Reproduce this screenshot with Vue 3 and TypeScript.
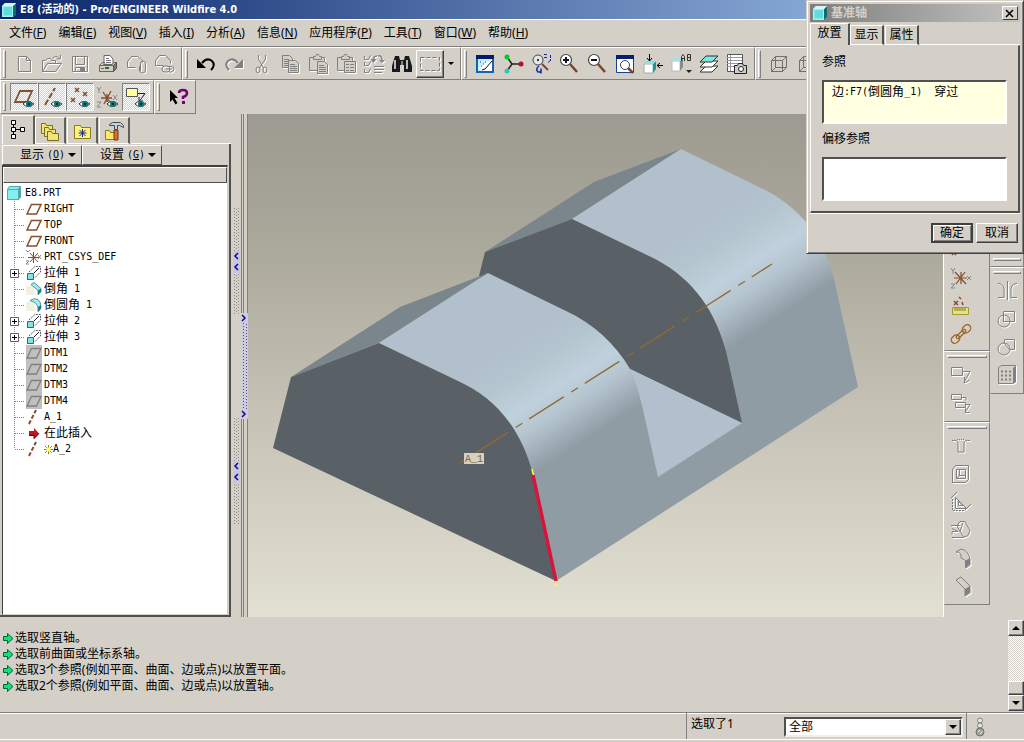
<script setup lang="ts">
import { ref } from 'vue'

interface Tool { icon: string; label: string; off?: boolean; pressed?: boolean; raised?: boolean; arrow?: boolean }
interface Node { text: string; icon: string; expand?: boolean; grey?: boolean; last?: boolean; fresh?: boolean }

const menus: [string, string][] = [
  ['文件', 'F'], ['编辑', 'E'], ['视图', 'V'], ['插入', 'I'], ['分析', 'A'],
  ['信息', 'N'], ['应用程序', 'P'], ['工具', 'T'], ['窗口', 'W'], ['帮助', 'H'],
]

const cube = '<path d="M1 4l3-3h11v11l-3 3H1z" fill="#7de9ec"/><path d="M3 5h9v8H3z" fill="#5fdcdc"/><path d="M12 4l3-3v11l-3 3z" fill="#156868"/><path d="M1.500 4.500h10v10h-10z" fill="none" stroke="#a8f0f0"/><path d="M1 4l3-3h11l-3 3z" fill="#d8f4f4"/>'
const eye = '<path d="M11 19q4-5 11 0q-6 5-11 0z" fill="#fff" stroke="#333"/><circle cx="17" cy="19" r="3" fill="#087878"/><circle cx="17" cy="19" r="1" fill="#012"/>'
const marks = '<path d="M7 3l4 4m0-4l-4 4M3 13l4 4m0-4l-4 4M15 7l4 4m0-4l-4 4" stroke="#84502f" stroke-width="1.500"/>'
const g = (d: string) => `<path d="${d}" fill="none" stroke="#808080"/>`
const lens = (inner: string) => `<path d="M13 12l7 8" stroke="#7a4630" stroke-width="2.500"/><circle cx="9" cy="8" r="5.500" fill="#fff" stroke="#444" stroke-width="1.200"/>${inner}`
const doc = (x: number, y: number) => `<path d="M${x}.5 ${y}.5h7l3 3v9h-10z" fill="#d4d0c8" stroke="#808080"/><path d="M${x + 2} ${y + 4}.5h5M${x + 2} ${y + 6}.5h7M${x + 2} ${y + 8}.5h7M${x + 2} ${y + 10}.5h7" stroke="#808080"/>`
const clip = '<path d="M3.500 5.500h15v13h-15z" fill="#d4d0c8" stroke="#808080"/><path d="M7.500 7.500v-3h2l1-2h2l1 2h2v3z" fill="#d4d0c8" stroke="#808080"/>'

const icons: Record<string, string> = {
  fresh: g('M6.500 4.500h8l4 4v11h-12zM14.500 4.500v4h4'),
  open: g('M2.500 19.500v-11h3l2-2h3l1 2h4v3M2.500 19.500l5-8h14l-6 8zM12.500 6.500q3-4 7 0M20.500 3v4h-4'),
  save: g('M4.500 4.500h15v15h-15zM7.500 4.500v8h9v-8M7.500 19v-3.500h9v4') + '<path d="M12 16h4v3h-4z" fill="#808080"/>',
  print: '<path d="M8 11V3.500h6l3 3.500v5" fill="#fff" stroke="#666"/><path d="M10 6.500h3M10 8.500h5M10 10.500h5" stroke="#777"/><path d="M3.500 13.500l3-3h2l-1 2h9l1-2h3l-3 3z" fill="#d8d8d0" stroke="#666"/><path d="M3.500 13.500h14v6h-14z" fill="#d0d0c4" stroke="#666"/><path d="M17.500 13.500l3-3v6l-3 3z" fill="#777" stroke="#555"/><path d="M9 15h4v2H9z" fill="#286a38"/><path d="M5 16.500h3" stroke="#a44"/>',
  mail: g('M3.500 15.500v-6l4-5h6l5 4v2M3.500 15.500h8M16.500 19v-7q0-3 2.500-3t2.500 3v6q0 3-3 3t-3-3v-4'),
  link: g('M3.500 13.500v-5l4-5h6l5 5v3M3.500 13.500h8M10 17q0-3 3-3h2q3 0 3 3t-3 3h-2q-3 0-3-3M14 17h6M16 14.500h3q3 0 3 2.500t-3 3h-2'),
  undo: '<path d="M8 11q5-6 10-2q4 4-1 9" fill="none" stroke="#000" stroke-width="2"/><path d="M3 7v9h9z" fill="#000"/>',
  redo: '<path d="M16 11q-5-6-10-2q-4 4 1 9" fill="none" stroke="#808080" stroke-width="2"/><path d="M21 7v9h-9z" fill="#808080"/>',
  cut: g('M8.500 3v4l5 9M15.500 3v4l-6 9') + '<ellipse cx="8" cy="18" rx="2" ry="3" fill="none" stroke="#808080"/><ellipse cx="15" cy="18" rx="2" ry="3" fill="none" stroke="#808080"/>',
  copy: doc(4, 3) + doc(10, 8),
  paste: clip + doc(11, 9),
  special: clip + '<path d="M10.500 9.500h11v11h-11z" fill="#d4d0c8" stroke="#808080"/>' + g('M12 12.500h3M12 15.500h3M12 18.500h3M16 12.500h4M16 15.500h4M16 18.500h4'),
  regen: g('M2.500 4v3.500h4l2-4M2.500 10v3.500h4l2-4M2.500 17v3.500h4l2-4M12 14.500h10M12 17.500h10M12 20.500h8')
    + '<path d="M15 4q-4 0-3.500 5M16 4q4-1 4 5" fill="none" stroke="#808080" stroke-width="1.500"/><path d="M8.500 7h6l-3 4zM17 8h6l-3 3z" fill="#808080"/>',
  find: '<path d="M5 4h4l1 4h4l1-4h4l3 10v6h-8v-7h-4v7H2v-6z" fill="#1a1a1a"/><path d="M5 8v9M17 8v9" stroke="#bbb" stroke-width="2"/><path d="M11 9h2v4h-2z" fill="#888"/>',
  region: '<path d="M3.500 6.500h19v13h-19z" fill="none" stroke="#fff" stroke-dasharray="4 2"/><path d="M2.500 5.500h19v13h-19z" fill="none" stroke="#777" stroke-dasharray="4 2"/>',
  repaint: '<path d="M3 3h18v18H3z" fill="#1464b4"/><path d="M3 3h18v4H3z" fill="#001a72"/><path d="M5 7h14v12H5z" fill="#c5eeff"/><path d="M19 7v12H9l-4-3z" fill="#fff"/><path d="M19 9l-7 8l-3 1" stroke="#111" fill="none"/><path d="M7 10h1M10 12h1M8 14h1M12 10h1" stroke="#069"/>',
  spin: '<path d="M6 5l5 7M6 19l5-7h9" stroke="#222" fill="none" stroke-width="1.500"/><circle cx="6" cy="5" r="2.500" fill="#0c2"/><circle cx="6" cy="19" r="2.500" fill="#2bc7bd"/><circle cx="20" cy="12" r="2.500" fill="#b01522"/>',
  orient: '<circle cx="9" cy="8" r="5" fill="#e5e5e5" stroke="#444"/><circle cx="9" cy="8" r="1" fill="#000"/><path d="M13 12l6 6" stroke="#7a4630" stroke-width="2"/><path d="M15 2.500h4M15 5.500h3M21.500 3v6M19 10.500l2.500-2" stroke="#1425a0" fill="none" stroke-dasharray="3 1"/><path d="M10 14q-4 3-1 6h3M12 16.500v5" stroke="#1425a0" fill="none" stroke-width="1.500"/>',
  zoomin: lens('<path d="M6 8h6M9 5v6" stroke="#112" stroke-width="2"/>'),
  zoomout: lens('<path d="M6 8h6" stroke="#112" stroke-width="2"/>'),
  refit: '<path d="M3.500 3.500h17v17h-17z" fill="#fff" stroke="#14429a"/><path d="M3 3h18v4H3z" fill="#061f76"/><path d="M15 16l5 5" stroke="#7a4630" stroke-width="2.500"/><circle cx="12" cy="13" r="4.500" fill="#fff" stroke="#444"/>',
  reorient: '<path d="M3 12h9v9H3z" fill="#fff" stroke="#aaa"/><path d="M12 12l3-3v8l-3 4z" fill="#169a9a"/><path d="M6 9h9l-3 3H3z" fill="#7fe5e5"/><path d="M8.500 2v7M6 6l2.500 3l2.500-3M22 13.500h-6M19 11l-3 2.500l3 2.500" stroke="#000" fill="none"/>',
  views: '<path d="M3 9h8v10H3z" fill="#fff" stroke="#bbb"/><path d="M11 9l3-3v9l-3 4z" fill="#8a8a8a"/><path d="M6 6h8l-3 3H3z" fill="#9fe5e5"/><path d="M12.500 9V4.500l1.500-2l1.500 2V9M12.500 6.500h3M18.500 2.500v6h3v-6zM18.500 5.500h3" fill="none" stroke="#333"/><path d="M17 18h6l-3 3z" fill="#222"/>',
  layers: '<g stroke="#333" fill="#fff"><path d="M3 20l6-6h12l-6 6z"/><path d="M3 15l6-6h12l-6 6z"/><path d="M3 10l6-6h12l-6 6z" fill="#7fe6e6"/></g>',
  shot: '<path d="M2.500 2.500h15v17h-15z" fill="#fff" stroke="#555"/><path d="M2 5.500h15M2 8.500h15M2 11.500h15M2 14.500h15M5.500 3v16" stroke="#999"/><path d="M9.500 13.500h3l1-2h4l1 2h3v8h-12z" fill="#ccc" stroke="#222"/><circle cx="16" cy="17" r="2.500" fill="#fff" stroke="#222"/>',
  wire: '<path d="M4.500 8.500h11v11h-11zM8.500 4.500h11v11h-11zM4.500 8.500l4-4M15.500 8.500l4-4M15.500 19.500l4-4M4.500 19.500l4-4" fill="none" stroke="#707070"/>',
  plane: '<path d="M3 17L8 6h12l-5 11z" fill="none" stroke="#84502f" stroke-width="1.800"/>' + eye,
  axis: '<path d="M5 20L15 3" stroke="#84502f" stroke-width="2" stroke-dasharray="6 2"/>' + eye,
  points: marks + eye,
  marks,
  csys: '<path d="M5 13h11M7 7l8 12M15 6L8 19M11 9v8" stroke="#84502f" stroke-width="1.300"/><path d="M1 2l2 3l2-3M3 5v3M17 10l4 5m0-5l-4 5M1 17h4l-4 5h4" stroke="#888" fill="none"/>' + eye,
  annot: '<path d="M2.500 3.500h11v8h-11z" fill="#ffffa0" stroke="#555"/><path d="M14 8.500h7l-5 7M15 12v4h4" stroke="#222" fill="none"/>' + eye,
  help: '<path d="M4 5l8 8H8.500l3 5l-2 1.500l-3-5L4 17z" fill="#000"/><path d="M13 8q0-3 4-3t4 3q0 3-4 4v2" fill="none" stroke="#750078" stroke-width="2.500"/><path d="M16 16h3v3h-3z" fill="#750078"/>',
  rcsys: '<path d="M5 12h13M6 6l11 12M16 6L7 18M12 6v12" stroke="#84502f" stroke-width="1.200"/><path d="M2 2l2 3l2-3M4 5v3M18 10l4 4m0-4l-4 4M2 18h4l-4 4h4" stroke="#888" fill="none"/>',
  ruler: '<path d="M5 7l4 4m0-4l-4 4M10 3l2 2M13 8l1 3" stroke="#84502f" stroke-width="1.500"/><path d="M3.500 13.500h16v7h-16z" fill="#e4e18a" stroke="#a29a30"/><path d="M6 14v3M8 14v3M10 14v3M12 14v3M14 14v3M16 14v3" stroke="#827a20"/>',
  chain: '<g fill="none" stroke="#9b6427" stroke-width="1.300" transform="rotate(-43 12 12)"><rect x="0" y="8.500" width="9" height="7" rx="3.500"/><rect x="6" y="10.500" width="12" height="3" rx="1.500"/><rect x="15" y="8.500" width="9" height="7" rx="3.500"/></g>',
  note: g('M2.500 4.500h11v8h-11zM14 8.500h7l-6 11M15.500 14v6l5-3'),
  notes: g('M2.500 3.500h10v5h-10zM13 6.500h4v3M6.500 11.500h10v5h-10zM17 13.500h4l-5 8M16.500 17v4.500h4'),
  hole: g('M3 6.500q6-1 6 3v8.500h6v-8.500q0-4 6-3') + '<path d="M8 5.500h8" stroke="#808080" stroke-dasharray="1 1"/>',
  shell: g('M3.500 7.500l3-4h13v14l-3 3h-13zM7.500 7.500h9v9h-9zM7.500 16.500l3-3h6M10.500 13.500v-6'),
  rib: g('M6.500 18.500v-11l11 11zM9.500 15.500v-4l5 4zM2 8l6-6M16 20l6-6') + '<path d="M3.500 9v11.500h12" fill="none" stroke="#808080" stroke-dasharray="2 1"/>',
  draft: g('M2 7.500h9M3 10.500l6 3H3M3 19.500h11l5-2l2-5l-5-9h-5l-3 4l3 6l3-9M14.500 19l-4-7M3 14.500v2'),
  round: '<path d="M12 12l5 3v7l4-3v-6q-2-9-9-10l-5 3q6 0 5 6z" fill="#d4d0c8" stroke="#808080"/><path d="M16 15l5-3v6l-5 4z" fill="#808080"/>',
  chamf: '<path d="M7 6l5-3l9 9v7l-5 3v-7z" fill="#d4d0c8" stroke="#808080"/><path d="M16 15l5-3v6l-5 4z" fill="#808080"/>',
  mirror: g('M12.500 2v19M3 4.500h1q6 1 5 9v5H3M22 4.500h-1q-6 1-5 9v5h6'),
  merge: '<circle cx="9" cy="14" r="6" fill="none" stroke="#808080"/>' + g('M8.500 4.500h11v10h-11z'),
  trim: '<circle cx="9" cy="14" r="6" fill="none" stroke="#808080"/>' + g('M9.500 8.500v-4h10v10h-5M9.500 8.500l5 6'),
  pattern: '<path d="M3.500 4.500l3-2h14v16l-3 2h-14z" fill="#d4d0c8" stroke="#808080"/><path d="M18 5l3-2v16l-3 2z" fill="#808080"/><path d="M6 8.500h11M6 12.500h11M6 16.500h11" stroke="#808080" stroke-width="2" stroke-dasharray="2 2"/>',
  tree: '<path d="M5.500 3.500h4v4h-4zM5.500 10.500h4v4h-4zM5.500 17.500h4v4h-4zM14.500 10.500h4v4h-4z" fill="#fff" stroke="#000"/><path d="M7.500 8v2M7.500 15v2M10 12.500h4" stroke="#000"/>',
  folders: '<g fill="#f2e47a" stroke="#77701c"><path d="M3.500 4.500h4l1 2h6v8h-11z"/><path d="M6.500 8.500h4l1 2h6v7h-11z"/><path d="M9.500 12.500h4l1 2h6v7h-11z"/></g>',
  favor: '<path d="M4.500 6.500h6l1 2h9v11h-16z" fill="#fff27a" stroke="#8a7a20"/><path d="M8.500 14h8M12.500 10v8M9.500 11l6 6M15.500 11l-6 6" stroke="#182880"/>',
  hammer: '<path d="M3.500 11.500h4l1 2h6v7h-11z" fill="#ffe86a" stroke="#8a7a20"/><path d="M7.500 5.500l3-2h8l3 3v2l-4-2h-2v4h-3v-4h-5z" fill="#c3d2dc" stroke="#444c55"/><path d="M12 11h4v10h-4z" fill="#d6742c" stroke="#743310"/>',
}

const small: Record<string, string> = {
  part: '<path d="M1 4l2-3h12v11l-2 3H1z" fill="#84eef0"/><path d="M12 4l3-3v11l-3 3z" fill="#3aa5aa"/><path d="M1.500 4.500h11v10h-11zM1.500 4.500l2-3h11v10l-2 3M12.500 4.500l2-3" fill="none" stroke="#5aa9ac"/>',
  plane: '<path d="M1 13L5.500 3.500H15L10.500 13z" fill="none" stroke="#84502f" stroke-width="1.500"/>',
  grey: '<path d="M0 0h16v16H0z" fill="#c0c0c0"/><path d="M1 13L5.500 3.500H15L10.500 13z" fill="none" stroke="#808080" stroke-width="1.300"/>',
  csys: '<path d="M2 8.500h11M4 4l8 9M12 4l-8 9M7.500 3v11" stroke="#84502f"/><path d="M0 1l2 2l2-2M12 6l3 4m0-4l-3 4M0 12h3l-3 3h3" stroke="#888" fill="none"/>',
  extrude: '<path d="M1.500 8.500h6v6h-6z" fill="#84e6e8" stroke="#1c6f72"/><path d="M3 7l6-5.500h5.500V7L8.500 13" fill="none" stroke="#556" stroke-dasharray="2 1"/><path d="M8 8l5-5" stroke="#223"/>',
  chamfer: '<path d="M0 6l6-4l4 12H0z" fill="#f2f0e0"/><path d="M5 3.500l3-2l7 6v3l-3 3v-4z" fill="#9eeef0" stroke="#5a9a9c"/><path d="M12 9.500l3-2v3.500l-3 3z" fill="#1f7a7e"/>',
  round: '<path d="M0 6l6-4l4 12H0z" fill="#f2f0e0"/><path d="M4 3.500q4-3 8-1q3 2 3 8l-3 4q1-9-8-11z" fill="#9eeef0" stroke="#5a9a9c"/><path d="M12 10l3-2v4l-3 3z" fill="#1f7a7e"/>',
  axis: '<path d="M3 15L10 1" stroke="#84502f" stroke-width="2" stroke-dasharray="4 2"/>',
  insert: '<path d="M3 6h5V3l5 5.500L8 14v-3H3z" fill="#c01420"/><path d="M3 10.500h5v3l5-5" fill="none" stroke="#600"/>',
}

const fileTools: Tool[] = [
  { icon: 'fresh', label: '新建', off: true }, { icon: 'open', label: '打开', off: true }, { icon: 'save', label: '保存', off: true },
  { icon: 'print', label: '打印' }, { icon: 'mail', label: '发送', off: true }, { icon: 'link', label: '链接', off: true },
]
const editTools: Tool[] = [
  { icon: 'undo', label: '撤消' }, { icon: 'redo', label: '重做', off: true }, { icon: 'cut', label: '剪切', off: true },
  { icon: 'copy', label: '复制', off: true }, { icon: 'paste', label: '粘贴', off: true }, { icon: 'special', label: '选择性粘贴', off: true },
  { icon: 'regen', label: '再生', off: true }, { icon: 'find', label: '查找' }, { icon: 'region', label: '选取框', raised: true, arrow: true },
]
const viewTools: Tool[] = [
  { icon: 'repaint', label: '重画' }, { icon: 'spin', label: '旋转中心' }, { icon: 'orient', label: '定向模式' },
  { icon: 'zoomin', label: '放大' }, { icon: 'zoomout', label: '缩小' }, { icon: 'refit', label: '重新调整' },
  { icon: 'reorient', label: '重定向' }, { icon: 'views', label: '视图列表' }, { icon: 'layers', label: '层' }, { icon: 'shot', label: '视图管理器' },
]
const modelTools: Tool[] = [{ icon: 'wire', label: '线框' }, { icon: 'wire', label: '隐藏线' }]
const topRow = [fileTools, editTools, viewTools, modelTools]
const datumRow: Tool[][] = [
  [
    { icon: 'plane', label: '平面显示', pressed: true }, { icon: 'axis', label: '轴显示', pressed: true },
    { icon: 'points', label: '点显示', pressed: true }, { icon: 'csys', label: '坐标系显示' }, { icon: 'annot', label: '注释显示', pressed: true },
  ],
  [{ icon: 'help', label: '帮助' }],
]
const sideA: Tool[][] = [
  [{ icon: 'marks', label: '点' }, { icon: 'rcsys', label: '坐标系' }, { icon: 'ruler', label: '分析' }, { icon: 'chain', label: '参照' }],
  [{ icon: 'note', label: '注释', off: true }, { icon: 'notes', label: '注释传播', off: true }],
  [
    { icon: 'hole', label: '孔', off: true }, { icon: 'shell', label: '壳', off: true }, { icon: 'rib', label: '筋', off: true },
    { icon: 'draft', label: '拔模', off: true }, { icon: 'round', label: '倒圆角', off: true }, { icon: 'chamf', label: '倒角', off: true },
  ],
]
const sideB: Tool[][] = [
  [],
  [
    { icon: 'mirror', label: '镜像', off: true }, { icon: 'merge', label: '合并', off: true },
    { icon: 'trim', label: '修剪', off: true }, { icon: 'pattern', label: '阵列', off: true },
  ],
]

const nodes: Node[] = [
  { text: 'RIGHT', icon: 'plane' }, { text: 'TOP', icon: 'plane' }, { text: 'FRONT', icon: 'plane' },
  { text: 'PRT_CSYS_DEF', icon: 'csys' }, { text: '拉伸 1', icon: 'extrude', expand: true },
  { text: '倒角 1', icon: 'chamfer' }, { text: '倒圆角 1', icon: 'round' },
  { text: '拉伸 2', icon: 'extrude', expand: true }, { text: '拉伸 3', icon: 'extrude', expand: true },
  { text: 'DTM1', icon: 'grey' }, { text: 'DTM2', icon: 'grey' }, { text: 'DTM3', icon: 'grey' }, { text: 'DTM4', icon: 'grey' },
  { text: 'A_1', icon: 'axis' }, { text: '在此插入', icon: 'insert' }, { text: 'A_2', icon: 'axis', last: true, fresh: true },
]

const messages = [
  '选取竖直轴。', '选取前曲面或坐标系轴。',
  '选取3个参照(例如平面、曲面、边或点)以放置平面。', '选取2个参照(例如平面、曲面、边或点)以放置轴。',
]

const navTabs = [['tree', '模型树'], ['folders', '文件夹浏览器'], ['favor', '收藏夹'], ['hammer', '连接']]
const dialogTabs = ['放置', '显示', '属性']
const navTab = ref(0)
const dialogTab = ref(0)
const filter = ref('全部')

// Splits a label into ideograph and Latin runs so that each gets its own face and size.
const runs = (text: string) =>
  (text.match(/[\u3000-\u9fff]+|[^\u3000-\u9fff]+/g) ?? []).map(t => ({ t, wide: /[\u3000-\u9fff]/.test(t) }))
</script>

<template>
  <div class="app">
    <header class="title">
      <svg width="16" height="16" viewBox="0 0 16 16" v-html="cube" />
      <span>E8 (活动的) - Pro/ENGINEER Wildfire 4.0</span>
    </header>

    <nav class="menu">
      <button v-for="m in menus" :key="m[1]" type="button">{{ m[0] }}(<u>{{ m[1] }}</u>)</button>
    </nav>

    <div v-for="(row, r) in [topRow, datumRow]" :key="r" class="bar">
      <div v-for="(group, i) in row" :key="i" class="group" :class="{ grow: r === 0 && i === 3 }">
        <i class="grip" />
        <template v-for="t in group" :key="t.label">
          <button type="button" class="tool" :class="{ pressed: t.pressed, raised: t.raised }" :aria-label="t.label">
            <svg width="24" height="24" viewBox="0 0 24 24" :class="{ off: t.off }" v-html="icons[t.icon]" />
          </button>
          <button v-if="t.arrow" type="button" class="drop" aria-label="选取框选项"><i class="down" /></button>
        </template>
      </div>
    </div>

    <main class="work">
      <aside class="nav">
        <div class="tabs" role="tablist">
          <button
            v-for="(t, i) in navTabs" :key="t[0]" type="button" role="tab" class="tab"
            :class="{ on: navTab === i }" :aria-selected="navTab === i" :aria-label="t[1]" @click="navTab = i"
          >
            <svg width="24" height="24" viewBox="0 0 24 24" v-html="icons[t[0]]" />
          </button>
          <span class="rest" />
        </div>
        <div class="pane">
          <div class="actions">
            <button type="button"><span>显示</span><span class="mono">(<u>O</u>)</span><i class="down" /></button>
            <button type="button"><span>设置</span><span class="mono">(<u>G</u>)</span><i class="down" /></button>
          </div>
          <div class="treebox">
            <div class="head" />
            <ul class="tree">
              <li class="root">
                <svg width="16" height="16" viewBox="0 0 16 16" v-html="small.part" />
                <span class="mono">E8.PRT</span>
              </li>
              <li v-for="n in nodes" :key="n.text">
                <svg class="branch" width="22" height="16" viewBox="0 0 22 16">
                  <path :d="n.last ? 'M10.500 0v8' : 'M10.500 0v16'" stroke="#808080" stroke-dasharray="1 1" />
                  <path d="M11 8.500h10" stroke="#808080" stroke-dasharray="1 1" />
                  <g v-if="n.expand">
                    <path d="M6.500 4.500h8v8h-8z" fill="#fff" stroke="#606060" />
                    <path d="M8 8.500h5M10.500 6v5" stroke="#000" />
                  </g>
                </svg>
                <svg width="16" height="16" viewBox="0 0 16 16" v-html="small[n.icon]" />
                <span class="label">
                  <svg v-if="n.fresh" width="9" height="9" viewBox="0 0 9 9">
                    <path d="M0 4.500h9M4.500 0v9M1 1l7 7M8 1l-7 7" stroke="#8a8420" />
                    <path d="M2.500 2.500h4v4h-4z" fill="#ffff60" />
                  </svg>
                  <span v-for="(s, k) in runs(n.text)" :key="k" :class="{ mono: !s.wide }">{{ s.t }}</span>
                </span>
              </li>
            </ul>
          </div>
        </div>
      </aside>

      <div class="sash">
        <div class="track">
          <svg v-for="k in 2" :key="k" width="7" height="106" viewBox="0 0 7 106">
            <path d="M1.500 0v106M5.500 0v106" stroke="#8c8c8c" stroke-dasharray="1 2" />
            <path d="M3.500 1v105" stroke="#8c8c8c" stroke-dasharray="1 2" />
            <path d="M0 43h7v22H0z" fill="#c8c6dc" />
            <path d="M5 45l-3 3l3 3M5 56l-3 3l3 3" fill="none" stroke="#0a0a96" stroke-width="1.500" />
          </svg>
        </div>
        <div class="rails">
          <svg width="7" height="106" viewBox="0 0 7 106">
            <path d="M0 0h7v106H0z" fill="#ceccdc" />
            <path d="M2.500 10v86M5.500 11v86" stroke="#4a4aa4" stroke-dasharray="1 2" />
            <path d="M1 2l3 3l-3 3M1 98l3 3l-3 3" fill="none" stroke="#0a0a96" stroke-width="1.500" />
          </svg>
        </div>
      </div>

      <section class="view" aria-label="模型">
        <svg viewBox="248 114 695 503" preserveAspectRatio="xMidYMid slice">
          <defs>
            <linearGradient id="fillet" gradientUnits="userSpaceOnUse" x1="458" y1="381" x2="522" y2="481">
              <stop offset="0" stop-color="#b1c0cc" /><stop offset=".22" stop-color="#b5c5d0" />
              <stop offset=".5" stop-color="#bfd1dc" /><stop offset=".68" stop-color="#b5c5d0" />
              <stop offset=".85" stop-color="#a2afb9" /><stop offset="1" stop-color="#8f9ca4" />
            </linearGradient>
          </defs>
          <path d="M485 252L594 182L681 149L572 219z" fill="#7b858c" />
          <path d="M572 219L681 149L759 187C794 203 821 230 834 279L858 387L556 581L533 474L726 351C713 303 686 274 651 257z" fill="url(#fillet)" />
          <path d="M485 252L572 219L651 257C686 274 713 303 726 351L742 423L630 369L560 340L479 276z" fill="#5a6166" />
          <path d="M291 377L400 307L488 273L379 343z" fill="#7b858c" />
          <path d="M379 343L488 273L566 311C592 323 615 343 630 369Q638 387 642 405L658 477L556 581L533 474C520 425 493 397 458 381z" fill="url(#fillet)" />
          <path d="M630 369L742 423L658 477L642 405Q638 387 630 369z" fill="#b1c0cc" />
          <path d="M291 377L379 343L458 381C493 397 520 425 533 474L556 581L273 448z" fill="#5a6166" />
          <path d="M460 463L772 264" fill="none" stroke="#8f6a35" stroke-width="1.300" stroke-dasharray="41 9 8 8" stroke-dashoffset="50" />
          <path d="M533 475L556 581" stroke="#d9143c" stroke-width="3.500" />
          <path d="M532 469l1.500 6M556 581v5" stroke="#ffff40" stroke-width="1.500" />
          <path d="M464 453h20v11h-20z" fill="#d6d0c0" />
          <text x="465" y="462" font-size="10" font-family="Liberation Mono, monospace" fill="#8a6030">A_1</text>
        </svg>
      </section>

      <div class="side">
        <div v-for="(group, i) in sideA" :key="i" class="stack">
          <i class="hgrip" />
          <button v-for="t in group" :key="t.icon" type="button" class="tool" :aria-label="t.label">
            <svg width="24" height="24" viewBox="0 0 24 24" :class="{ off: t.off }" v-html="icons[t.icon]" />
          </button>
        </div>
      </div>
      <div class="side narrow">
        <div v-for="(group, i) in sideB" :key="i" class="stack">
          <i class="hgrip" />
          <button v-for="t in group" :key="t.icon" type="button" class="tool" :aria-label="t.label">
            <svg width="24" height="24" viewBox="0 0 24 24" :class="{ off: t.off }" v-html="icons[t.icon]" />
          </button>
        </div>
      </div>
    </main>

    <section class="log">
      <ul>
        <li v-for="m in messages" :key="m">
          <svg width="13" height="13" viewBox="0 0 13 13">
            <path d="M1.500 4.500h4v-3l5.500 5l-5.500 5v-3h-4z" fill="#14e07a" stroke="#063" />
          </svg>
          <span>{{ m }}</span>
        </li>
      </ul>
      <div class="scroll">
        <button type="button" aria-label="向上滚动"><i class="up" /></button>
        <span class="well" />
        <span class="thumb" />
        <button type="button" aria-label="向下滚动"><i class="down" /></button>
      </div>
    </section>

    <footer class="status">
      <div class="picked">选取了1</div>
      <div class="pick">
        <select v-model="filter" aria-label="选取过滤器"><option>全部</option></select>
        <span class="knob"><i class="down" /></span>
      </div>
      <div class="lamp">
        <svg width="12" height="20" viewBox="0 0 12 20">
          <circle cx="6" cy="3.500" r="2.500" fill="#e6e4de" stroke="#808080" />
          <circle cx="6" cy="8.500" r="2.500" fill="#e6e4de" stroke="#808080" />
          <circle cx="6" cy="15" r="4" fill="#a4a498" stroke="#707070" />
          <path d="M4 15l2-2M6 17l3-3" stroke="#e8e8e0" />
        </svg>
      </div>
    </footer>

    <div class="dialog" role="dialog" aria-labelledby="dialog-title">
      <div class="caption">
        <svg width="16" height="16" viewBox="0 0 16 16" v-html="cube" />
        <span id="dialog-title">基准轴</span>
        <button type="button" aria-label="关闭">
          <svg width="10" height="9" viewBox="0 0 10 9"><path d="M1 1l7 7M8 1l-7 7" stroke="#000" stroke-width="1.500" /></svg>
        </button>
      </div>
      <div class="dtabs" role="tablist">
        <button
          v-for="(t, i) in dialogTabs" :key="t" type="button" role="tab"
          :class="{ on: dialogTab === i }" :aria-selected="dialogTab === i" @click="dialogTab = i"
        >{{ t }}</button>
        <span class="rest" />
      </div>
      <div class="sheet">
        <div id="refs" class="cap">参照</div>
        <div class="list picked-list" role="listbox" aria-labelledby="refs">
          <div role="option" aria-selected="true">
            <span v-for="(s, k) in runs('边:F7(倒圆角_1)  穿过')" :key="k" :class="{ mono: !s.wide }">{{ s.t }}</span>
          </div>
        </div>
        <div id="offs" class="cap">偏移参照</div>
        <div class="list" role="listbox" aria-labelledby="offs" />
      </div>
      <div class="confirm">
        <button type="button" class="main">确定</button>
        <button type="button">取消</button>
      </div>
    </div>
  </div>
</template>

<style>
body { margin: 0; background: #d4d0c8; }
</style>

<style scoped>
* { box-sizing: border-box; }
.app {
  position: relative;
  display: flex;
  flex-direction: column;
  min-height: 100vh;
  overflow: hidden;
  background: #d4d0c8;
  color: #000;
  font: 12px/16px "Noto Sans", "Noto Sans CJK SC", sans-serif;
}
button {
  margin: 0;
  padding: 0;
  border: 0;
  border-radius: 0;
  background: none;
  color: inherit;
  font: inherit;
  white-space: nowrap;
}
svg { display: block; flex: none; }
ul { list-style: none; margin: 0; padding: 0; }
.mono { font-family: "DejaVu Sans Mono", monospace; font-size: 10px; white-space: pre; }
.off { filter: drop-shadow(1px 1px 0 #fff); }
.down { display: block; border: 4px solid transparent; border-top-color: #000; border-bottom: 0; }
.up { display: block; border: 4px solid transparent; border-bottom-color: #000; border-top: 0; }

.title {
  display: flex;
  align-items: center;
  gap: 3px;
  height: 19px;
  padding-left: 1px;
  background: linear-gradient(90deg, #0a246a, #a6caf0);
  color: #fff;
  font: bold 11px/18px "DejaVu Sans Condensed", "DejaVu Sans", "Noto Sans CJK SC", sans-serif;
}
.menu {
  display: flex;
  gap: 12px;
  height: 27px;
  padding: 0 9px;
  border-top: 1px solid #fff;
  white-space: nowrap;
}
.bar { display: flex; height: 34px; }
.group {
  display: flex;
  align-items: center;
  padding-right: 3px;
  border: 1px solid;
  border-color: #fff #808080 #808080 #fff;
}
.group.grow { flex: 1; }
.bar:nth-of-type(1) { border-top: 1px solid #808080; }
.grip {
  width: 3px;
  height: 28px;
  margin: 0 4px 0 2px;
  border: 1px solid;
  border-color: #fff #808080 #808080 #fff;
}
.tool {
  display: flex;
  align-items: center;
  justify-content: center;
  width: 28px;
  height: 28px;
}
.tool.pressed {
  border: 1px solid;
  border-color: #808080 #fff #fff #808080;
  background: repeating-conic-gradient(#fff 0 25%, #d4d0c8 0 50%) 0 0 / 2px 2px;
}
.tool.raised { border: 1px solid; border-color: #fff #404040 #404040 #fff; box-shadow: inset -1px -1px #808080; }
.drop { display: flex; align-items: center; justify-content: center; width: 13px; height: 28px; }
.drop .down { border-width: 3px; border-bottom: 0; }

.work { display: flex; flex: 1; }
.nav { display: flex; flex-direction: column; width: 231px; }
.tabs { display: flex; align-items: flex-end; height: 30px; padding-left: 2px; }
.tab {
  display: flex;
  align-items: center;
  justify-content: center;
  width: 31px;
  height: 27px;
  border: 1px solid #fff;
  border-right: 2px solid #606060;
  margin-right: 1px;
}
.tab.on { width: 33px; height: 29px; border-bottom: 0; margin-right: 0; padding-bottom: 3px; }
.rest { flex: 1; border-bottom: 1px solid #fff; }
.pane {
  display: flex;
  flex: 1;
  flex-direction: column;
  padding: 1px 1px 0 2px;
  border-right: 2px solid #505050;
  border-bottom: 2px solid #505050;
}
.actions { display: flex; height: 20px; }
.actions button {
  display: flex;
  align-items: center;
  gap: 3px;
  width: 80px;
  padding: 0 6px 0 17px;
  border: 1px solid;
  border-color: #fff #505050 #505050 #fff;
}
.actions .down { margin-left: auto; }
.treebox {
  flex: 1;
  border: 1px solid;
  border-color: #404040 #d4d0c8 #d4d0c8 #404040;
  border-top-width: 2px;
  background: #fff;
}
.head {
  height: 16px;
  border: 1px solid;
  border-color: #fff #505050 #505050 #fff;
  background: #d4d0c8;
}
.tree { padding: 2px 0 0 1px; }
.tree li { display: flex; align-items: center; height: 16px; }
.tree .root { gap: 3px; padding-left: 2px; }
.label { display: flex; align-items: center; padding-left: 2px; white-space: pre; }

.sash { display: flex; width: 17px; }
.track { display: flex; flex-direction: column; gap: 104px; width: 10px; padding: 94px 0 0 2px; }
.rails {
  width: 7px;
  padding-top: 199px;
  background: linear-gradient(90deg, #808080 1px, #d4d0c8 1px 2px, #808080 2px 3px, #d4d0c8 3px 6px, #808080 6px);
}
.view { position: relative; flex: 1; min-width: 0; background: linear-gradient(#9d9a91, #a9a69a 24%, #c6c3b6 60%, #e2e0d3); }
.view svg { position: absolute; inset: 0; width: 100%; height: 100%; }
.side { width: 47px; border-left: 1px solid #fff; }
.side.narrow { width: 34px; border-left: 0; }
.stack {
  display: flex;
  flex-direction: column;
  padding: 3px 2px 4px;
  border: 1px solid;
  border-color: #fff #808080 #808080 #d4d0c8;
}
.stack:first-child { justify-content: flex-end; height: 237px; padding-bottom: 2px; }
.narrow .stack:first-child { height: 153px; }
.hgrip { height: 3px; margin-bottom: 3px; border: 1px solid; border-color: #fff #808080 #808080 #fff; }

.log { display: flex; justify-content: space-between; height: 95px; padding: 3px 0 1px; }
.log ul { padding: 10px 0 0 2px; }
.log li { display: flex; align-items: center; height: 16px; }
.scroll { display: flex; flex-direction: column; width: 16px; }
.scroll button, .thumb, .knob {
  display: flex;
  align-items: center;
  justify-content: center;
  height: 16px;
  border: 1px solid;
  border-color: #fff #404040 #404040 #fff;
  background: #d4d0c8;
  box-shadow: inset -1px -1px #808080;
}
.thumb { height: 14px; }
.well { flex: 1; background: repeating-conic-gradient(#fff 0 25%, #d4d0c8 0 50%) 0 0 / 2px 2px; }

.status {
  display: flex;
  align-items: flex-start;
  justify-content: flex-end;
  height: 30px;
  border-top: 1px solid #808080;
  box-shadow: inset 0 1px #fff, inset 0 -2px #d4d0c8, inset 0 -3px #fff;
}
.picked { width: 98px; height: 26px; padding: 3px 0 0 4px; border-left: 1px solid #808080; }
.pick { position: relative; width: 179px; height: 21px; margin-top: 4px; }
.pick select {
  width: 100%;
  height: 20px;
  padding: 0 20px 0 3px;
  border: 2px solid;
  border-color: #505050 #f0eee8 #f0eee8 #505050;
  border-radius: 0;
  appearance: none;
  background: #fff;
  color: #000;
  font: inherit;
}
.knob { position: absolute; top: 2px; right: 2px; width: 16px; pointer-events: none; }
.lamp { width: 58px; height: 26px; margin-left: 3px; padding: 4px 0 0 7px; border-left: 1px solid #808080; }

.dialog {
  position: absolute;
  top: 0;
  right: 0;
  width: 218px;
  padding: 3px 3px 10px;
  border: 1px solid;
  border-color: #d4d0c8 #404040 #404040 #d4d0c8;
  background: #d4d0c8;
  box-shadow: inset 1px 1px #fff, inset -1px -1px #808080;
}
.caption {
  display: flex;
  align-items: center;
  gap: 3px;
  height: 18px;
  padding: 0 2px;
  background: linear-gradient(90deg, #7e7e7e, #c2c2c0);
  color: #d4d0c8;
  font-weight: bold;
}
.caption button {
  display: flex;
  align-items: center;
  justify-content: center;
  width: 16px;
  height: 14px;
  margin-left: auto;
  border: 1px solid;
  border-color: #fff #404040 #404040 #fff;
  background: #d4d0c8;
}
.dtabs { display: flex; align-items: flex-end; height: 23px; }
.dtabs button {
  width: 34px;
  height: 20px;
  margin-right: 1px;
  border: 1px solid #fff;
  border-right: 2px solid #505050;
}
.dtabs button.on { width: 40px; height: 22px; margin-right: 0; border-bottom: 0; padding-bottom: 4px; }
.sheet {
  padding: 8px 11px 10px;
  border: 1px solid;
  border-color: #d4d0c8 #505050 #505050 #fff;
  border-right-width: 2px;
  border-bottom-width: 2px;
  box-shadow: 0 1px #fff;
}
.cap { height: 16px; margin-bottom: 10px; }
.list {
  height: 44px;
  border: 2px solid;
  border-color: #505050 #fff #fff #505050;
  background: #fff;
}
.picked-list { margin-bottom: 7px; padding: 1px 8px; background: #ffffe1; white-space: pre; }
.picked-list > div { display: flex; align-items: center; height: 18px; }
.confirm { display: flex; justify-content: flex-end; gap: 3px; padding: 10px 2px 0; }
.confirm button {
  width: 42px;
  height: 20px;
  border: 1px solid;
  border-color: #fff #404040 #404040 #fff;
  box-shadow: inset -1px -1px #808080;
}
.confirm .main { border: 2px solid #404040; box-shadow: inset 1px 1px #fff, inset -1px -1px #808080; }
</style>
